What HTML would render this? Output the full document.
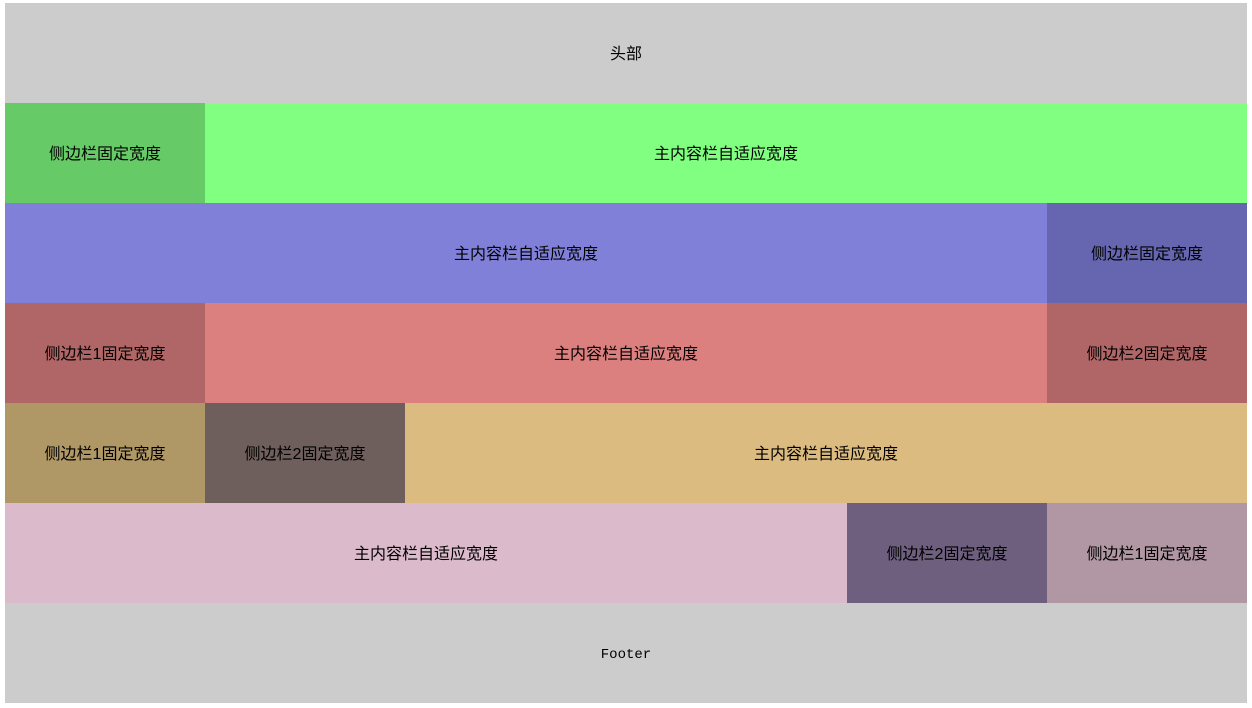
<!DOCTYPE html>
<html><head><meta charset="utf-8"><style>
body{margin:0;background:#fff;font-family:"Liberation Sans","Noto Sans CJK SC",sans-serif;font-size:16px;color:#000}
.w{position:absolute;left:5px;top:3px;width:1242px}
.r{display:flex;height:100px}
.r div{display:flex;align-items:center;justify-content:center;height:100px;box-sizing:border-box;padding-bottom:2px}
.s{width:200px;flex:none}
.m{flex:1}
</style></head><body><div class="w">
<div class="r"><div class="m" style="background:#cccccc">头部</div></div>
<div class="r"><div class="s" style="background:#66cb66">侧边栏固定宽度</div><div class="m" style="background:#80ff80">主内容栏自适应宽度</div></div>
<div class="r"><div class="m" style="background:#8080d9">主内容栏自适应宽度</div><div class="s" style="background:#6666b0">侧边栏固定宽度</div></div>
<div class="r"><div class="s" style="background:#b06666">侧边栏1固定宽度</div><div class="m" style="background:#dc7f7f">主内容栏自适应宽度</div><div class="s" style="background:#b06666">侧边栏2固定宽度</div></div>
<div class="r"><div class="s" style="background:#b09866">侧边栏1固定宽度</div><div class="s" style="background:#6e5f5c">侧边栏2固定宽度</div><div class="m" style="background:#dbbb7f">主内容栏自适应宽度</div></div>
<div class="r"><div class="m" style="background:#dbbbcb">主内容栏自适应宽度</div><div class="s" style="background:#6e5f7f">侧边栏2固定宽度</div><div class="s" style="background:#b097a3">侧边栏1固定宽度</div></div>
<div class="r"><div class="m" style="background:#cccccc;font-family:'Liberation Mono',monospace;font-size:14px;padding:4px 0 0 0">Footer</div></div>
</div></body></html>
